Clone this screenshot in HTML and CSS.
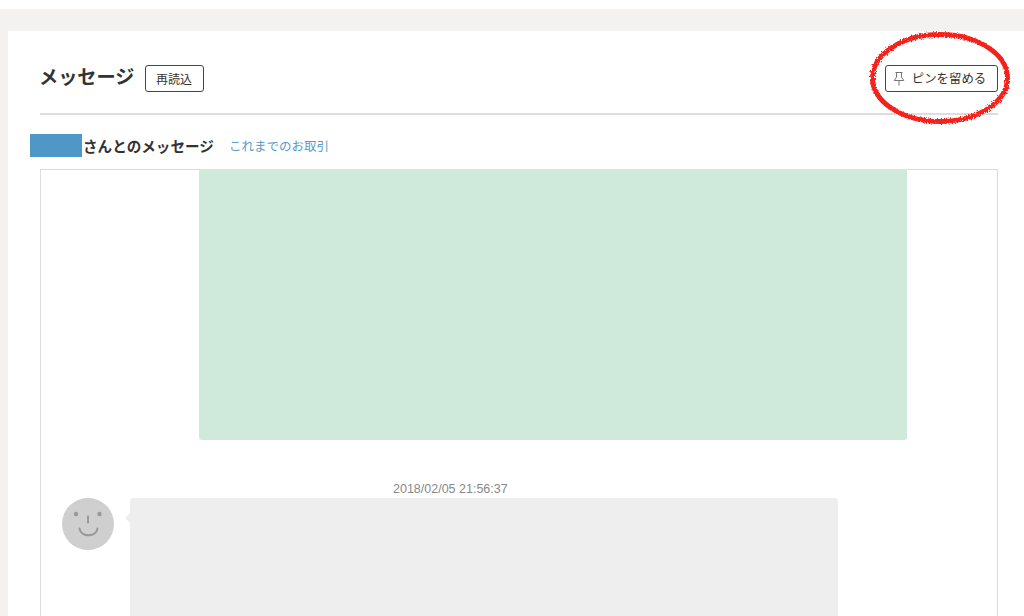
FILE: index.html
```html
<!DOCTYPE html>
<html lang="ja">
<head>
<meta charset="utf-8">
<title>メッセージ</title>
<link rel="stylesheet" href="styles.css">
</head>
<body>
<div class="band"></div>
<main class="panel">
  <header class="head">
    <div class="head-left">
      <h1 class="title">メッセージ</h1>
      <button class="btn btn-reload">再読込</button>
    </div>
    <button class="btn btn-pin">
      <svg class="pin" width="12" height="15" viewBox="0 0 12 15" fill="none" stroke="#777" stroke-width="1"><path d="M2.500 1.500h7M3.500 1.500v4.700L1.200 9.500h9.600L8.500 6.200V1.500M6 9.500V14.500"/></svg>
      <span>ピンを留める</span>
    </button>
  </header>
  <div class="sub">
    <span class="mask"></span>
    <h2 class="sub-title">さんとのメッセージ</h2>
    <a class="sub-link" href="#">これまでのお取引</a>
  </div>
  <section class="thread">
    <div class="own"></div>
    <div class="msg">
      <div class="avatar">
        <svg width="52" height="52" viewBox="0 0 52 52" fill="none"><circle cx="26" cy="26" r="26" fill="#cfcfcf"/><circle cx="14" cy="16" r="2.200" fill="#999"/><circle cx="37.500" cy="16" r="2.200" fill="#999"/><path d="M26 18.500v6M17.500 30.500c1.500 9 16.500 9 18 0" stroke="#999" stroke-width="2" stroke-linecap="round"/></svg>
      </div>
      <div class="msg-body">
        <time class="date">2018/02/05 21:56:37</time>
        <div class="bubble"></div>
      </div>
    </div>
  </section>
</main>
<svg class="circle" width="160" height="110" viewBox="0 0 160 110" fill="none">
  <defs><filter id="rough" x="-10%" y="-10%" width="120%" height="120%"><feTurbulence type="fractalNoise" baseFrequency="0.7" numOctaves="2" seed="3"/><feDisplacementMap in="SourceGraphic" scale="4"/></filter></defs>
  <ellipse cx="80" cy="55" rx="67.500" ry="43.500" stroke="#f5231c" stroke-width="5" filter="url(#rough)"/>
</svg>
</body>
</html>
```
FILE: styles.css
```css
* { box-sizing: border-box; }
html, body { height: 616px; overflow: hidden; }
body {
  margin: 0;
  background: #fff;
  color: #333;
  font-family: "Noto Sans CJK JP", "Noto Sans", sans-serif;
}
.band { height: 22px; margin-top: 9px; background: #f3f2f1; }
.panel {
  margin-left: 8px;
  padding: 34px 26px 0 32px;
  background: #fff;
  position: relative;
  box-shadow: -8px 0 0 #f3f2f1;
  height: 585px;
}
.head {
  display: flex;
  justify-content: space-between;
  align-items: center;
  height: 50px;
  padding-bottom: 21px;
  border-bottom: 2px solid #ddd;
}
.head-left { display: flex; align-items: center; gap: 10px; }
.title { margin: -5px 0 0 -1px; font-size: 19.200px; line-height: 27px; font-weight: 700; color: #333; }
.btn {
  display: flex;
  align-items: center;
  justify-content: center;
  height: 27px;
  padding: 0;
  border: 1px solid #444;
  border-radius: 3px;
  background: #fff;
  color: #333;
  font: 12px/1 "Noto Sans CJK JP", sans-serif;
}
.btn-reload { width: 59px; }
.btn-pin { width: 113px; gap: 7px; padding-right: 4px; font-size: 12.400px; }
.sub { display: flex; align-items: center; height: 23px; margin: 19px 0 0 -10px; }
.mask { width: 52px; height: 23px; background: #4e97c6; }
.sub-title { margin: 0 0 0 1px; font-size: 14.600px; line-height: 23px; font-weight: 700; color: #333; }
.sub-link { margin-left: 15px; font-size: 12.500px; line-height: 23px; color: #5a9cc4; text-decoration: none; }
.thread {
  margin-top: 12px;
  height: 460px;
  border: 1px solid #ddd;
  border-bottom: 0;
}
.own {
  width: 708px;
  height: 271px;
  margin-left: 158px;
  margin-top: -1px;
  background: #cfe9da;
  border-radius: 0 0 3px 3px;
}
.msg { display: flex; margin: 41px 0 0 21px; }
.avatar { width: 52px; height: 52px; margin-top: 17px; flex: none; }
.avatar svg { display: block; }
.msg-body { margin-left: 16px; }
.date { display: block; height: 17px; margin-left: 263px; font-size: 12.500px; line-height: 17px; color: #888; font-family: "Liberation Sans", sans-serif; }
.bubble {
  position: relative;
  width: 708px;
  height: 130px;
  background: #eee;
  border-radius: 3px 3px 0 0;
}
.bubble::before {
  content: "";
  position: absolute;
  left: -5px;
  top: 15px;
  width: 10px;
  height: 10px;
  background: #eee;
  transform: rotate(45deg) scale(.7);
}
.circle { position: absolute; left: 860px; top: 23px; pointer-events: none; }
```
